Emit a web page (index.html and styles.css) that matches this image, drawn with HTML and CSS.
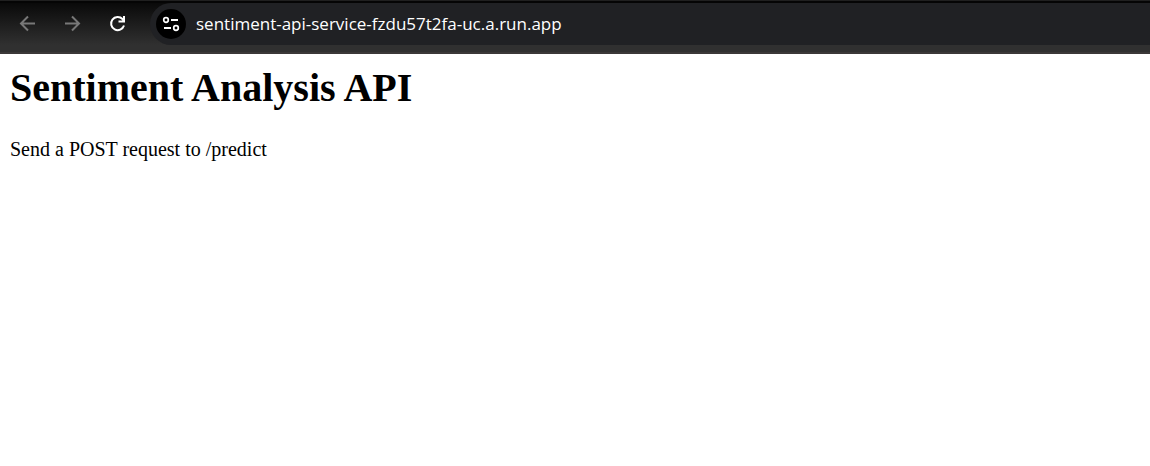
FILE: index.html
```html
<!DOCTYPE html>
<html lang="en">
<head>
<meta charset="utf-8">
<title>Sentiment Analysis API</title>
<link rel="stylesheet" href="styles.css">
</head>
<body>
<header class="toolbar">
  <nav class="nav-buttons" aria-label="Browser navigation">
    <button class="nav-button" type="button" aria-label="Back" disabled>
      <svg class="icon" viewBox="0 0 20 20"><path d="M17 9.500H3M10 2.500L3 9.500l7 7"/></svg>
    </button>
    <button class="nav-button" type="button" aria-label="Forward" disabled>
      <svg class="icon" viewBox="0 0 20 20"><path d="M2 9.500h14M9 2.500l7 7-7 7"/></svg>
    </button>
    <button class="nav-button nav-button-active" type="button" aria-label="Reload">
      <svg class="icon" viewBox="0 0 20 20"><path d="M16 11.500A6.600 6.600 0 1 1 14.500 5L16 6.800M16 2V7.500H10.500"/></svg>
    </button>
  </nav>
  <div class="omnibox">
    <button class="site-info" type="button" aria-label="View site information">
      <svg class="icon" viewBox="0 0 20 20"><circle cx="5" cy="6" r="2.300" stroke-width="1.700"/><path d="M10 6h7M3 14h7"/><circle cx="15" cy="14" r="2.300" stroke-width="1.700"/></svg>
    </button>
    <input class="address" type="text" aria-label="Address" value="sentiment-api-service-fzdu57t2fa-uc.a.run.app" spellcheck="false">
  </div>
</header>
<main class="page">
  <h1 class="title">Sentiment Analysis API</h1>
  <p class="text">Send a POST request to /predict</p>
</main>
</body>
</html>
```
FILE: styles.css
```css
* {
  box-sizing: border-box;
}

body {
  margin: 0;
  background: #fff;
  color: #000;
}

.toolbar {
  display: flex;
  padding-bottom: 7px;
  border-top: 1px solid #202020;
  border-bottom: 2px solid #3b3838;
  background: linear-gradient(#080808, #303030 44px);
  box-shadow: inset 0 2px #050505;
}

.nav-buttons {
  display: flex;
  align-items: center;
  gap: 15px;
  padding: 2px 17px 0 13px;
}

.nav-button,
.site-info {
  display: flex;
  align-items: center;
  justify-content: center;
  width: 30px;
  height: 30px;
  padding: 0;
  border: 0;
  border-radius: 50%;
  background: transparent;
  color: #787878;
}

.nav-button-active {
  color: #fff;
}

.icon {
  width: 20px;
  height: 20px;
  fill: none;
  stroke: currentColor;
  stroke-width: 2;
}

.omnibox {
  display: flex;
  flex: 1;
  align-items: center;
  gap: 10px;
  margin-top: 2px;
  padding: 6px 0 6px 6px;
  border-radius: 21px 0 0 21px;
  background: #202124;
}

.site-info {
  background: #000;
  color: #fff;
}

.address {
  flex: 1;
  min-width: 0;
  height: 30px;
  padding: 0;
  border: 0;
  outline: 0;
  background: transparent;
  color: #fff;
  font: 17px/30px "Segoe UI", "Open Sans", sans-serif;
}

.page {
  padding: 11px 10px;
  font: 20px/23px "Liberation Serif", serif;
}

.title {
  margin: 0 0 27px;
  font-size: 40px;
  line-height: 46px;
}

.text {
  margin: 0;
}
```
